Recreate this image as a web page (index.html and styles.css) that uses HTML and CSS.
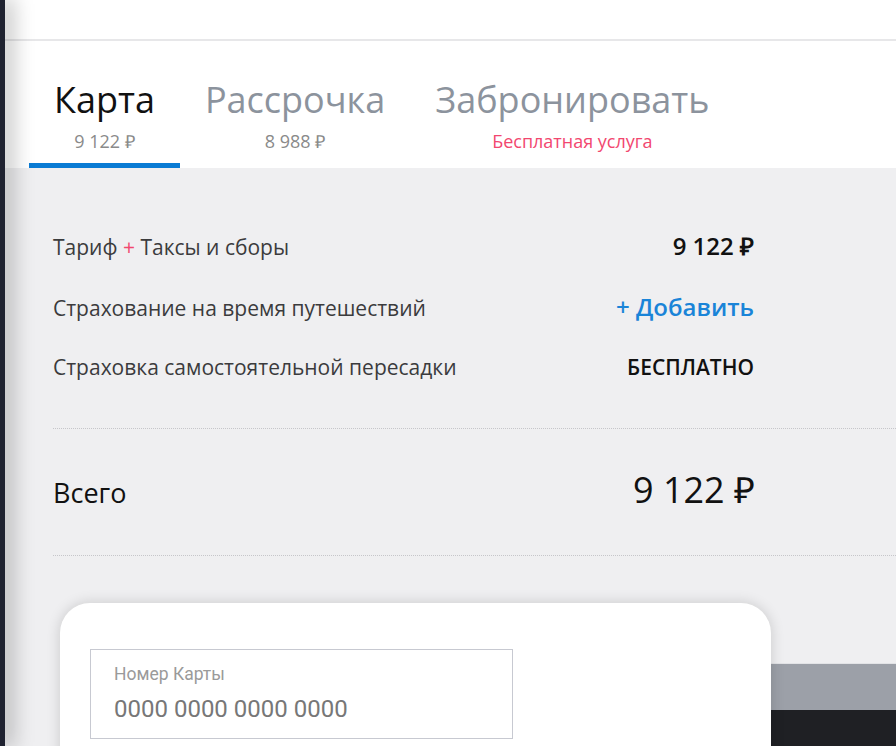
FILE: index.html
```html
<!DOCTYPE html>
<html lang="ru">
<head>
<meta charset="utf-8">
<title>Оплата</title>
<link rel="stylesheet" href="styles.css">
</head>
<body>
<div class="screen">
  <div class="rail"></div>
  <main class="panel">
    <header class="topbar"></header>
    <nav class="tabs">
      <div class="tab tab-active">
        <span class="tab-title">Карта</span>
        <span class="tab-sub">9 122 ₽</span>
      </div>
      <div class="tab">
        <span class="tab-title">Рассрочка</span>
        <span class="tab-sub">8 988 ₽</span>
      </div>
      <div class="tab">
        <span class="tab-title">Забронировать</span>
        <span class="tab-sub tab-sub-accent">Бесплатная услуга</span>
      </div>
    </nav>
    <section class="summary">
      <div class="rows">
        <div class="row">
          <span class="row-label">Тариф <span class="plus">+</span> Таксы и сборы</span>
          <span class="row-value">9 122 ₽</span>
        </div>
        <div class="row">
          <span class="row-label">Страхование на время путешествий</span>
          <span class="row-value row-link">+ Добавить</span>
        </div>
        <div class="row">
          <span class="row-label">Страховка самостоятельной пересадки</span>
          <span class="row-value row-free">БЕСПЛАТНО</span>
        </div>
      </div>
      <div class="divider"></div>
      <div class="total">
        <span class="total-label">Всего</span>
        <span class="total-value">9 122 ₽</span>
      </div>
      <div class="divider"></div>
    </section>
    <section class="pay">
      <div class="card">
        <label class="field">
          <span class="field-label">Номер Карты</span>
          <span class="field-value">0000 0000 0000 0000</span>
        </label>
      </div>
      <div class="backdrop">
        <div class="backdrop-gap"></div>
        <div class="backdrop-band"></div>
        <div class="backdrop-dark"></div>
      </div>
    </section>
  </main>
</div>
</body>
</html>
```
FILE: styles.css
```css
html, body {
  margin: 0;
  padding: 0;
  height: 100%;
  overflow: hidden;
  background: #efeff1;
  font-family: "Open Sans", "Liberation Sans", sans-serif;
}

.screen {
  display: flex;
  width: 896px;
  height: 746px;
  overflow: hidden;
}

.rail {
  width: 5px;
  flex: 0 0 5px;
  background: #1f2230;
  position: relative;
  z-index: 5;
  box-shadow: 2px 0 22px 3px rgba(0, 0, 0, 0.38);
}

.panel {
  flex: 1;
  display: flex;
  flex-direction: column;
  min-width: 0;
  background: #efeff1;
}

.topbar {
  height: 39px;
  flex: 0 0 39px;
  background: #ffffff;
  border-bottom: 2px solid #e7e7e9;
}

.tabs {
  height: 127px;
  flex: 0 0 127px;
  box-sizing: border-box;
  background: #ffffff;
  display: flex;
  align-items: flex-end;
  padding-left: 24px;
}

.tab {
  display: flex;
  flex-direction: column;
  align-items: center;
  padding: 0 25px 10px;
  border-bottom: 5px solid transparent;
}

.tab-active {
  border-bottom-color: #0a7bd4;
}

.tab-title {
  font-size: 36px;
  line-height: 44px;
  color: #8c939d;
  white-space: nowrap;
}

.tab-active .tab-title {
  color: #111111;
}

.tab-sub {
  margin-top: 7px;
  font-size: 18px;
  line-height: 24px;
  color: #8a8a8a;
  white-space: nowrap;
}

.tab-sub-accent {
  color: #f2476f;
}

.summary {
  padding: 47px 0 0 48px;
}

.rows {
  padding-right: 142px;
}

.row {
  display: flex;
  justify-content: space-between;
  align-items: baseline;
  line-height: 61px;
  height: 61px;
}

.row-label {
  font-size: 21px;
  color: #3b3b3d;
}

.plus {
  color: #f2476f;
}

.row-value {
  font-size: 24px;
  font-weight: 600;
  color: #111111;
}

.row-link {
  color: #1a84d8;
}

.row-free {
  font-size: 21px;
}

.divider {
  margin-top: 30px;
  border-top: 1px dotted #c6c6ca;
}

.total {
  display: flex;
  justify-content: space-between;
  align-items: baseline;
  padding: 39px 141px 40px 0;
}

.total-label {
  font-size: 27px;
  line-height: 44px;
  color: #111111;
}

.total-value {
  font-size: 36px;
  line-height: 44px;
  color: #111111;
}

.total + .divider {
  margin-top: 0;
}

.pay {
  flex: 1;
  display: flex;
  padding: 47px 0 0 55px;
  min-height: 0;
}

.card {
  width: 711px;
  flex: 0 0 711px;
  box-sizing: border-box;
  background: #ffffff;
  border-radius: 30px 30px 0 0;
  box-shadow: 0 0 14px rgba(0, 0, 0, 0.16);
  padding: 46px 0 0 30px;
  position: relative;
  z-index: 2;
  height: 170px;
}

.field {
  display: flex;
  flex-direction: column;
  width: 423px;
  height: 90px;
  box-sizing: border-box;
  border: 1px solid #c7c9d1;
  padding: 13px 0 0 23px;
  font-family: Roboto, "Liberation Sans", sans-serif;
}

.field-label {
  font-size: 17.5px;
  line-height: 23px;
  color: #9a9a9a;
}

.field-value {
  margin-top: 8px;
  font-size: 24px;
  line-height: 30px;
  color: #777777;
}

.backdrop {
  flex: 1;
  display: flex;
  flex-direction: column;
}

.backdrop-gap {
  height: 60px;
  flex: 0 0 60px;
}

.backdrop-band {
  height: 47px;
  flex: 0 0 47px;
  box-sizing: border-box;
  background: #9ca0a8;
  border-top: 1px solid #e2e3e6;
}

.backdrop-dark {
  flex: 1;
  background: #1f2024;
}
```
